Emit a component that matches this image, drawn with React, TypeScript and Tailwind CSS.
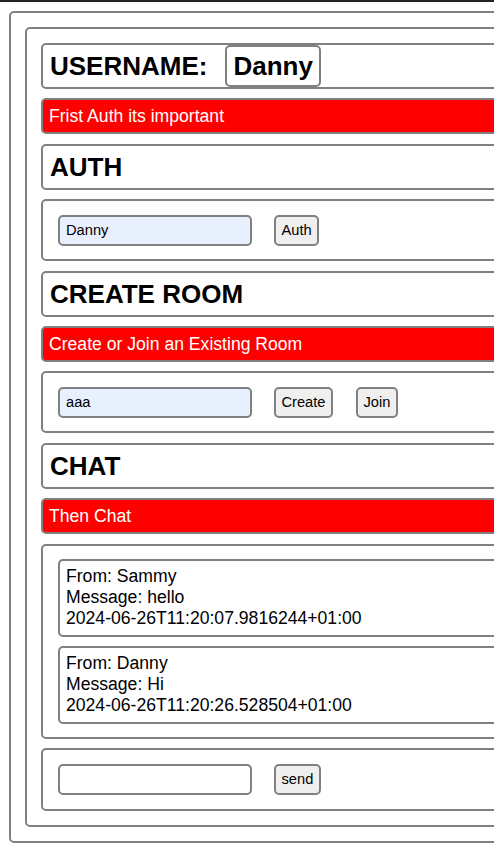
const box = "border-2 border-[#808080] rounded-[5px]";
const heading = `${box} h-[46px] flex items-center px-[7px] text-[26px] font-bold leading-none`;
const banner = `${box} h-[36px] flex items-center px-[6px] bg-[#ff0000] text-white text-[17.6px]`;
const row = `${box} h-[62px] flex items-center pl-[15px]`;
const input =
  "w-[194px] h-[31px] border-2 border-[#808080] rounded-[5px] px-[6px] text-[14.67px] outline-none";
const button =
  "h-[31px] border-2 border-[#808080] rounded-[5px] bg-[#efefef] px-[5.5px] text-[14.67px]";

const messages = [
  { from: "Sammy", text: "hello", at: "2024-06-26T11:20:07.9816244+01:00" },
  { from: "Danny", text: "Hi", at: "2024-06-26T11:20:26.528504+01:00" },
];

export default function App() {
  return (
    <div
      className="w-screen h-screen overflow-hidden bg-white text-black"
      style={{ fontFamily: '"Liberation Sans", Arial, sans-serif' }}
    >
      <div className="h-[2px] bg-[#222]" />
      <div className={`${box} ml-[9px] mt-[9px] w-[620px] p-[14px]`}>
        <div className={`${box} p-[14px] flex flex-col gap-[9.4px]`}>
          <div className={`${box} h-[46px] flex items-center pl-[7px]`}>
            <span className="text-[26px] font-bold">USERNAME:</span>
            <span className={`${box} ml-[18px] h-[42px] flex items-center px-[6px] text-[26px] font-bold`}>
              Danny
            </span>
          </div>
          <div className={banner}>Frist Auth its important</div>

          <div className={heading}>AUTH</div>
          <div className={row}>
            <input className={`${input} bg-[#e8f0fe]`} defaultValue="Danny" />
            <button className={`${button} ml-[22px]`}>Auth</button>
          </div>

          <div className={heading}>CREATE ROOM</div>
          <div className={banner}>Create or Join an Existing Room</div>
          <div className={row}>
            <input className={`${input} bg-[#e8f0fe]`} defaultValue="aaa" />
            <button className={`${button} ml-[22px]`}>Create</button>
            <button className={`${button} ml-[23px]`}>Join</button>
          </div>

          <div className={heading}>CHAT</div>
          <div className={banner}>Then Chat</div>
          <div className={`${box} px-[15px] pt-[13px] pb-[13px] flex flex-col gap-[9px]`}>
            {messages.map((m) => (
              <div
                key={m.at}
                className={`${box} px-[6px] py-[5.5px] text-[17.6px] leading-[21px]`}
              >
                <div>From: {m.from}</div>
                <div>Message: {m.text}</div>
                <div>{m.at}</div>
              </div>
            ))}
          </div>
          <div className={`${row} h-[63px]`}>
            <input className={`${input} bg-white`} />
            <button className={`${button} ml-[22px]`}>send</button>
          </div>
        </div>
      </div>
    </div>
  );
}
